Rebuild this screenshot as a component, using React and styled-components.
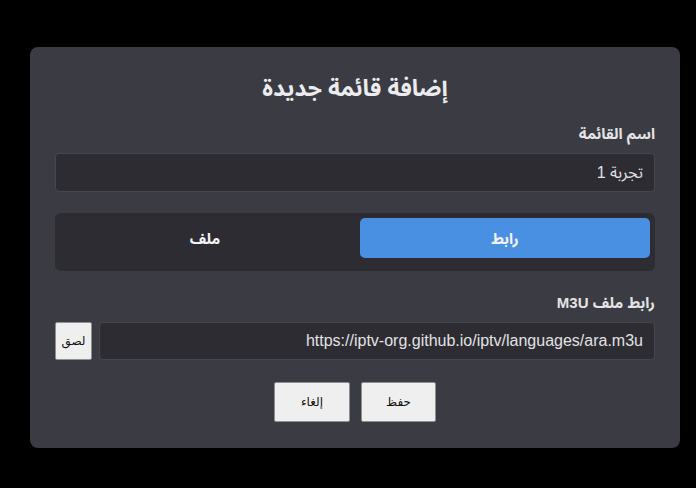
import React from "react";
import styled, { createGlobalStyle } from "styled-components";

const Global = createGlobalStyle`
  html, body { margin: 0; padding: 0; background: #000; }
  body { font-family: "Noto Sans Arabic", "DejaVu Sans", sans-serif; }
  * { box-sizing: border-box; }
`;

const Page = styled.div`
  width: 696px;
  height: 488px;
  padding: 47px 16px 0 30px;
`;

const Card = styled.div`
  direction: rtl;
  width: 650px;
  background: #3b3c43;
  border-radius: 8px;
  padding: 27px 25px 26px;
  box-shadow: 0 4px 24px rgba(0, 0, 0, 0.6);
  display: flex;
  flex-direction: column;
`;

const Title = styled.h2`
  margin: 0 0 20px;
  text-align: center;
  font-size: 23px;
  line-height: 30px;
  font-weight: 700;
  color: #ececee;
`;

const Field = styled.div`
  display: flex;
  flex-direction: column;
  margin-bottom: ${(p) => p.$mb || 0}px;
`;

const Label = styled.label`
  font-family: "Liberation Sans", "Noto Sans Arabic", "DejaVu Sans", sans-serif;
  font-size: 15px;
  line-height: 20px;
  font-weight: 700;
  color: #e4e4e6;
  margin-bottom: 9px;
`;

const TextInput = styled.input`
  direction: rtl;
  width: 100%;
  height: ${(p) => p.$h || 39}px;
  background: #2c2c32;
  border: 1px solid #46474e;
  border-radius: 4px;
  padding: 0 11px;
  color: #e2e2e4;
  font-family: "Liberation Sans", "Noto Sans Arabic", "DejaVu Sans", sans-serif;
  font-size: 16px;
  outline: none;
`;

const Toggle = styled.div`
  display: flex;
  gap: 10px;
  background: #2c2c32;
  border-radius: 6px;
  padding: 5px 5px 13px;
  margin-bottom: 22px;
`;

const ToggleBtn = styled.button`
  flex: 1;
  height: 40px;
  border: none;
  border-radius: 5px;
  background: ${(p) => (p.$active ? "#4a90e2" : "transparent")};
  color: #f4f4f6;
  font-family: "Noto Sans Arabic", "DejaVu Sans", sans-serif;
  font-size: 15px;
  font-weight: 700;
  padding-top: 3px;
  cursor: pointer;
`;

const Row = styled.div`
  display: flex;
  gap: 7px;
  margin-bottom: 22px;
`;

const PlainBtn = styled.button`
  flex: none;
  width: ${(p) => p.$w}px;
  height: ${(p) => p.$h}px;
  padding: 0;
  background: #efefef;
  border: 1px solid #8f8f8f;
  border-radius: 2px;
  color: #111;
  font-family: "DejaVu Serif", "DejaVu Sans", serif;
  font-size: 12px;
  cursor: pointer;
`;

const Actions = styled.div`
  display: flex;
  justify-content: center;
  gap: 11px;
`;

export default function App() {
  return (
    <>
      <Global />
      <Page>
        <Card>
          <Title>إضافة قائمة جديدة</Title>
          <Field $mb={21}>
            <Label>اسم القائمة</Label>
            <TextInput defaultValue="تجربة 1" />
          </Field>
          <Toggle>
            <ToggleBtn $active>رابط</ToggleBtn>
            <ToggleBtn>ملف</ToggleBtn>
          </Toggle>
          <Field>
            <Label>رابط ملف M3U</Label>
            <Row>
              <TextInput $h={38} defaultValue="https://iptv-org.github.io/iptv/languages/ara.m3u" />
              <PlainBtn $w={37} $h={38}>لصق</PlainBtn>
            </Row>
          </Field>
          <Actions>
            <PlainBtn $w={75} $h={40}>حفظ</PlainBtn>
            <PlainBtn $w={76} $h={40}>إلغاء</PlainBtn>
          </Actions>
        </Card>
      </Page>
    </>
  );
}
